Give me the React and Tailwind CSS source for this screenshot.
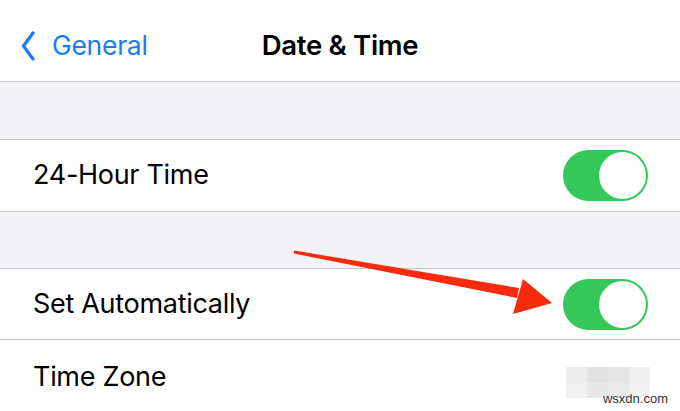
import React from "react";

function Toggle() {
  return (
    <div className="w-[85px] h-[51px] rounded-full bg-[#34c759] flex items-center justify-end p-[2px]">
      <div className="w-[47px] h-[47px] rounded-full bg-white" />
    </div>
  );
}

function BlurredValue() {
  const cols = ["bg-[#ececec]", "bg-[#e2e2e2]", "bg-[#e6e6e6]", "bg-[#efefef]"];
  const cols2 = ["bg-[#f0f0f0]", "bg-[#e8e8e8]", "bg-[#ebebeb]", "bg-[#f2f2f2]"];
  return (
    <div className="flex flex-col w-[84px] h-[31px] mt-[10px]">
      <div className="flex flex-1">
        {cols.map((c, i) => (
          <div key={i} className={`flex-1 ${c}`} />
        ))}
      </div>
      <div className="flex flex-1">
        {cols2.map((c, i) => (
          <div key={i} className={`flex-1 ${c}`} />
        ))}
      </div>
    </div>
  );
}

export default function App() {
  return (
    <div
      className="relative w-[680px] h-[411px] overflow-hidden bg-[#f2f2f7] text-black"
      style={{ fontFamily: "Inter, 'Noto Sans', sans-serif" }}
    >
      {/* Nav bar */}
      <div className="h-[82px] pt-[11px] bg-white border-b border-[#c6c6c8] grid grid-cols-[1fr_auto_1fr] items-center">
        <div className="flex items-center pl-[21px] text-[#1a7cf5]">
          <svg width="14" height="30" viewBox="0 0 14 30" fill="none">
            <path d="M12 2 L2.5 15 L12 28" stroke="currentColor" strokeWidth="3.2" strokeLinecap="round" strokeLinejoin="round" />
          </svg>
          <span className="ml-[17px] text-[26.5px] tracking-[-0.3px]">General</span>
        </div>
        <div className="text-[27.5px] font-semibold tracking-[-0.3px]">Date &amp; Time</div>
        <div />
      </div>

      <div className="h-[57px]" />

      {/* 24-Hour Time */}
      <div className="h-[73px] bg-white border-y border-[#c6c6c8] flex items-center justify-between pl-[33px] pr-[32px]">
        <span className="text-[27px] tracking-[-0.3px]">24-Hour Time</span>
        <Toggle />
      </div>

      <div className="h-[56px]" />

      <div className="bg-white border-t border-[#c6c6c8]">
        <div className="h-[71px] flex items-center justify-between pl-[33px] pr-[32px] border-b border-[#c6c6c8]">
          <span className="text-[27px] tracking-[-0.3px]">Set Automatically</span>
          <Toggle />
        </div>
        <div className="h-[71px] flex items-center justify-between pl-[33px] pr-[30px] pt-[4px]">
          <span className="text-[27px] tracking-[-0.3px]">Time Zone</span>
          <BlurredValue />
        </div>
      </div>

      {/* Red arrow annotation */}
      <svg className="absolute left-0 top-0" width="680" height="411" viewBox="0 0 680 411">
        <polygon points="294.3,250.5 519,288 517,298 293.7,253.5" fill="#f72a0c" />
        <polygon points="523,279 552,303 513,314" fill="#f72a0c" />
      </svg>

      <div
        className="absolute right-[12px] bottom-[3px] text-[13px] text-[#333]"
        style={{ fontFamily: "'Liberation Sans', sans-serif" }}
      >
        wsxdn.com
      </div>
    </div>
  );
}
